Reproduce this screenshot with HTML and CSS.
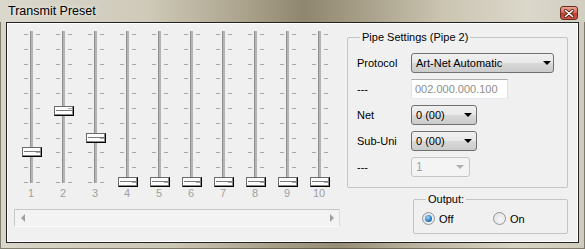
FILE: index.html
```html
<!DOCTYPE html>
<html lang="en">
<head>
<meta charset="UTF-8">
<title>Transmit Preset</title>
<link rel="stylesheet" href="styles.css">
</head>
<body>
<div class="window">
    <div class="titlebar">
        <span class="title">Transmit Preset</span>
        <span class="close">
            <svg width="10" height="9" viewBox="0 0 10 9">
                <path d="M1.5 1.5 L8.5 7.5 M8.5 1.5 L1.5 7.5" stroke="#5a1a12" stroke-width="3" stroke-linecap="round"/>
                <path d="M1.5 1.5 L8.5 7.5 M8.5 1.5 L1.5 7.5" stroke="#fff" stroke-width="1.6" stroke-linecap="round"/>
            </svg>
        </span>
    </div>
    <div class="client">
        <div class="mixer">
            <div class="sliders">
                <div class="slider"><div class="rail"><div class="track"></div><div class="thumb" style="top:118px"></div></div><div class="num">1</div></div>
                <div class="slider"><div class="rail"><div class="track"></div><div class="thumb" style="top:77px"></div></div><div class="num">2</div></div>
                <div class="slider"><div class="rail"><div class="track"></div><div class="thumb" style="top:104px"></div></div><div class="num">3</div></div>
                <div class="slider"><div class="rail"><div class="track"></div><div class="thumb" style="top:148px"></div></div><div class="num">4</div></div>
                <div class="slider"><div class="rail"><div class="track"></div><div class="thumb" style="top:148px"></div></div><div class="num">5</div></div>
                <div class="slider"><div class="rail"><div class="track"></div><div class="thumb" style="top:148px"></div></div><div class="num">6</div></div>
                <div class="slider"><div class="rail"><div class="track"></div><div class="thumb" style="top:148px"></div></div><div class="num">7</div></div>
                <div class="slider"><div class="rail"><div class="track"></div><div class="thumb" style="top:148px"></div></div><div class="num">8</div></div>
                <div class="slider"><div class="rail"><div class="track"></div><div class="thumb" style="top:148px"></div></div><div class="num">9</div></div>
                <div class="slider"><div class="rail"><div class="track"></div><div class="thumb" style="top:148px"></div></div><div class="num">10</div></div>
            </div>
            <div class="hscroll">
                <span class="arrow left"></span>
                <span class="arrow right"></span>
            </div>
        </div>
        <div class="settings">
            <fieldset class="group pipe">
                <legend>Pipe Settings (Pipe 2)</legend>
                <div class="row">
                    <label>Protocol</label>
                    <div class="combo protocol">Art-Net Automatic</div>
                </div>
                <div class="row">
                    <label>---</label>
                    <div class="field">002.000.000.100</div>
                </div>
                <div class="row">
                    <label>Net</label>
                    <div class="combo small">0 (00)</div>
                </div>
                <div class="row">
                    <label>Sub-Uni</label>
                    <div class="combo small">0 (00)</div>
                </div>
                <div class="row last">
                    <label>---</label>
                    <div class="combo disabled">1</div>
                </div>
            </fieldset>
            <fieldset class="group output">
                <legend>Output:</legend>
                <div class="radios">
                    <div class="opt"><span class="radio checked"></span>Off</div>
                    <div class="opt"><span class="radio"></span>On</div>
                </div>
            </fieldset>
        </div>
    </div>
</div>
</body>
</html>
```

FILE: styles.css
```css
* {
    box-sizing: border-box;
}

body {
    margin: 0;
    width: 585px;
    height: 249px;
    overflow: hidden;
    font-family: "Liberation Sans", Arial, sans-serif;
    font-size: 11px;
    color: #000;
    background: #cdc8b8;
}

.window {
    height: 249px;
    display: flex;
    flex-direction: column;
    background: linear-gradient(to right, #d9d6ca 0%, #cbc6b4 30%, #a49c85 48%, #958d76 58%, #bdb6a1 72%, #d8d4c6 88%, #cfcbbd 100%);
    box-shadow: inset 0 0 0 1px rgba(60, 55, 40, .55);
}

.titlebar {
    height: 22px;
    flex: none;
    display: flex;
    justify-content: space-between;
    align-items: flex-start;
    padding: 0 7px 0 8px;
    background: linear-gradient(to right, #dad7cc 0%, #cfcab9 25%, #aaa28b 42%, #8e866f 52%, #a79f88 62%, #cbc5b2 76%, #dbd7ca 90%, #d2cec0 100%);
}
.title {
    font-size: 12.5px;
    line-height: 22px;
    text-shadow: 0 0 5px rgba(255, 255, 255, .9);
}
.close {
    margin-top: 6px;
    width: 18px;
    height: 14px;
    border: 1px solid #6b2a20;
    border-radius: 3px;
    background: linear-gradient(#eaa596 0%, #d2705f 45%, #bd3d2e 55%, #c85a44 100%);
    display: flex;
    align-items: center;
    justify-content: center;
}

.client {
    flex: 1;
    margin: 0 6px 6px;
    border: 1px solid #222;
    box-shadow: inset 1px 1px 0 #fff, inset -1px -1px 0 #fff;
    background: #f0f0f0;
    display: flex;
}

/* faders */
.mixer {
    width: 333px;
    padding: 6px 0 0 7px;
}
.sliders {
    display: flex;
    margin-left: 1px;
}
.slider {
    width: 32px;
    display: flex;
    flex-direction: column;
    align-items: center;
}
.rail {
    position: relative;
    width: 32px;
    height: 160px;
}
.rail::before, .rail::after {
    content: '';
    position: absolute;
    top: 5px;
    width: 4px;
    height: 149px;
    background: repeating-linear-gradient(to bottom, #a8a8a8 0 1px, transparent 1px 14.8px);
}
.rail::before {
    left: 9px;
}
.rail::after {
    left: 21px;
}
.track {
    position: absolute;
    left: 15px;
    top: 2px;
    width: 3px;
    height: 152px;
    background: #b4b4b4;
    border-left: 1px solid #8e8e8e;
}
.thumb {
    position: absolute;
    left: 7px;
    width: 20px;
    height: 10px;
    border: 1px solid;
    border-color: #6a6a6a #000 #000 #6a6a6a;
    box-shadow: inset -1px -1px 0 #8a8a8a, inset 1px 1px 0 #fff;
    background: linear-gradient(#fbfbfb 0 3px, #7a7a7a 3px 4px, #ffffff 4px);
}
.num {
    color: #a0a0a0;
    line-height: 11px;
    margin-top: -1px;
}

.hscroll {
    margin-top: 10px;
    width: 326px;
    height: 18px;
    border: 1px solid;
    border-color: #c6c6c6 #dedede #fcfcfc #c6c6c6;
    background: #f3f3f3;
    display: flex;
    justify-content: space-between;
    align-items: center;
    padding: 0 5px 0 6px;
}
.arrow {
    width: 0;
    height: 0;
    border-top: 4px solid transparent;
    border-bottom: 4px solid transparent;
}
.arrow.left {
    border-right: 4px solid #a0a0a0;
}
.arrow.right {
    border-left: 4px solid #a0a0a0;
}

/* settings */
.settings {
    margin-left: 7px;
    display: flex;
    flex-direction: column;
    align-items: flex-start;
}
.group {
    margin: 0;
    border: 1px solid #bfc5c9;
    border-radius: 2px;
}
.group legend {
    padding: 0 2px;
    line-height: 13px;
}
.pipe {
    width: 221px;
    margin-top: 8px;
    padding: 9px 0 10px 9px;
}
.pipe legend {
    margin-left: 3px;
}
.row {
    display: flex;
    align-items: center;
    height: 20px;
    margin-bottom: 6px;
}
.row.last {
    margin-bottom: 0;
}
.row label {
    width: 54px;
}

.combo {
    height: 20px;
    border: 1px solid #707070;
    border-radius: 3px;
    background: linear-gradient(#f0f0f0 0%, #e8e8e8 50%, #d9d9d9 50%, #cbcbcb 100%);
    display: flex;
    align-items: center;
    padding-left: 4px;
}
.combo::after {
    content: '';
    margin-left: auto;
    margin-right: 2px;
    border-top: 4px solid #000;
    border-left: 4px solid transparent;
    border-right: 4px solid transparent;
}
.combo.protocol {
    width: 143px;
}
.combo.small {
    width: 66px;
}
.combo.small::after {
    margin-right: 4px;
}
.combo.disabled {
    width: 59px;
    color: #a3a3a3;
    font-size: 12px;
    border-color: #c2c6c9;
    background: #f4f4f4;
}
.combo.disabled::after {
    margin-right: 5px;
    border-top-color: #b0b0b0;
}
.field {
    width: 97px;
    height: 20px;
    border: 1px solid;
    border-color: #abadb3 #dbdfe6 #e3e9ef #e2e3ea;
    background: #fff;
    color: #8d8d8d;
    display: flex;
    align-items: center;
    padding-left: 3px;
}

.output {
    width: 155px;
    margin: 5px 0 0 66px;
    padding: 6px 0 8px 8px;
}
.output legend {
    margin-left: 4px;
}
.radios {
    display: flex;
    height: 13px;
}
.opt {
    width: 71px;
    display: flex;
    align-items: center;
    gap: 4px;
}
.radio {
    width: 13px;
    height: 13px;
    border-radius: 50%;
    border: 1px solid #8e969c;
    background: radial-gradient(circle at 60% 60%, #f7f7f7 0, #dcdcdc 100%);
    display: flex;
    align-items: center;
    justify-content: center;
}
.radio.checked::after {
    content: '';
    width: 7px;
    height: 7px;
    border-radius: 50%;
    background: radial-gradient(circle at 40% 35%, #a6d6f7 0, #2f82c6 55%, #0f3f70 100%);
}
```
